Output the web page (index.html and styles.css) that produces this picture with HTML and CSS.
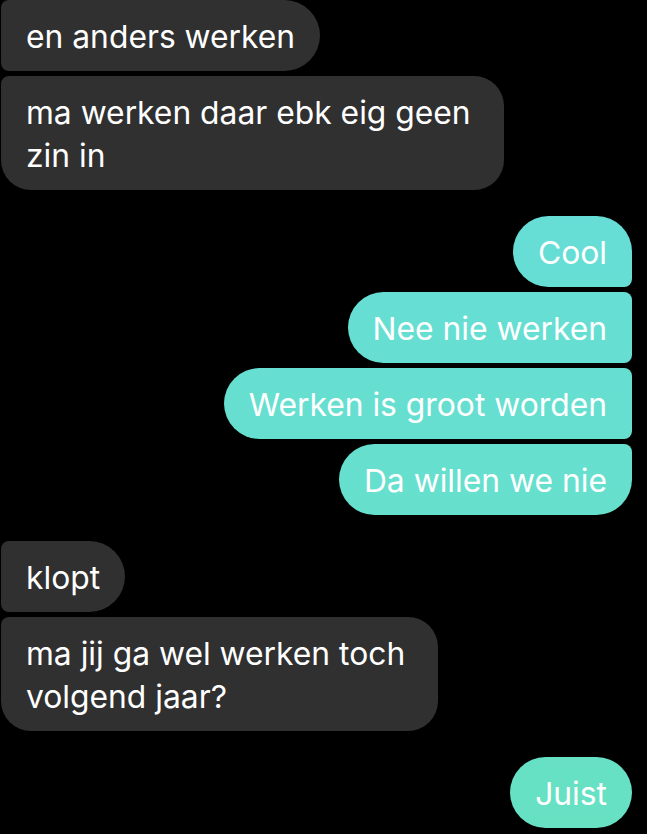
FILE: index.html
```html
<!DOCTYPE html>
<html lang="nl">
<head>
<meta charset="utf-8">
<link rel="stylesheet" href="styles.css">
</head>
<body>
<main class="thread">
  <section class="group group-in">
    <div class="bubble in first">en anders werken</div>
    <div class="bubble in last multi">ma werken daar ebk eig geen<br>zin in</div>
  </section>
  <section class="group group-out">
    <div class="bubble out first">Cool</div>
    <div class="bubble out mid">Nee nie werken</div>
    <div class="bubble out mid">Werken is groot worden</div>
    <div class="bubble out last">Da willen we nie</div>
  </section>
  <section class="group group-in">
    <div class="bubble in first">klopt</div>
    <div class="bubble in last multi">ma jij ga wel werken toch<br>volgend jaar?</div>
  </section>
  <section class="group group-out">
    <div class="bubble out single">Juist</div>
  </section>
</main>
</body>
</html>
```
FILE: styles.css
```css
html, body {
  margin: 0;
  padding: 0;
  background: #000;
}
body {
  width: 647px;
  height: 834px;
  overflow: hidden;
  font-family: Inter, "Noto Sans", sans-serif;
}
.thread {
  display: flex;
  flex-direction: column;
  gap: 26px;
  padding: 0 15px 0 1px;
}
.group {
  display: flex;
  flex-direction: column;
  gap: 5px;
}
.group-in { align-items: flex-start; }
.group-out { align-items: flex-end; }
.bubble {
  box-sizing: border-box;
  padding: 15px 25px 13px;
  font-size: 31.8px;
  line-height: 43px;
  letter-spacing: 0;
  color: #fff;
  white-space: nowrap;
}
.bubble.multi { padding-right: 33px; }
.in {
  background: #303030;
}
.out {
  background: linear-gradient(180deg, #66dcdc 0px, #66dfd0 420px, #67e1c2 834px) fixed;
}
.in.first { border-radius: 8px 36px 36px 8px; }
.in.last { border-radius: 8px 30px 30px 30px; }
.out.first { border-radius: 36px 36px 8px 36px; }
.out.mid { border-radius: 36px 8px 8px 36px; }
.out.last { border-radius: 36px 8px 36px 36px; }
.out.single { border-radius: 36px; }
```
